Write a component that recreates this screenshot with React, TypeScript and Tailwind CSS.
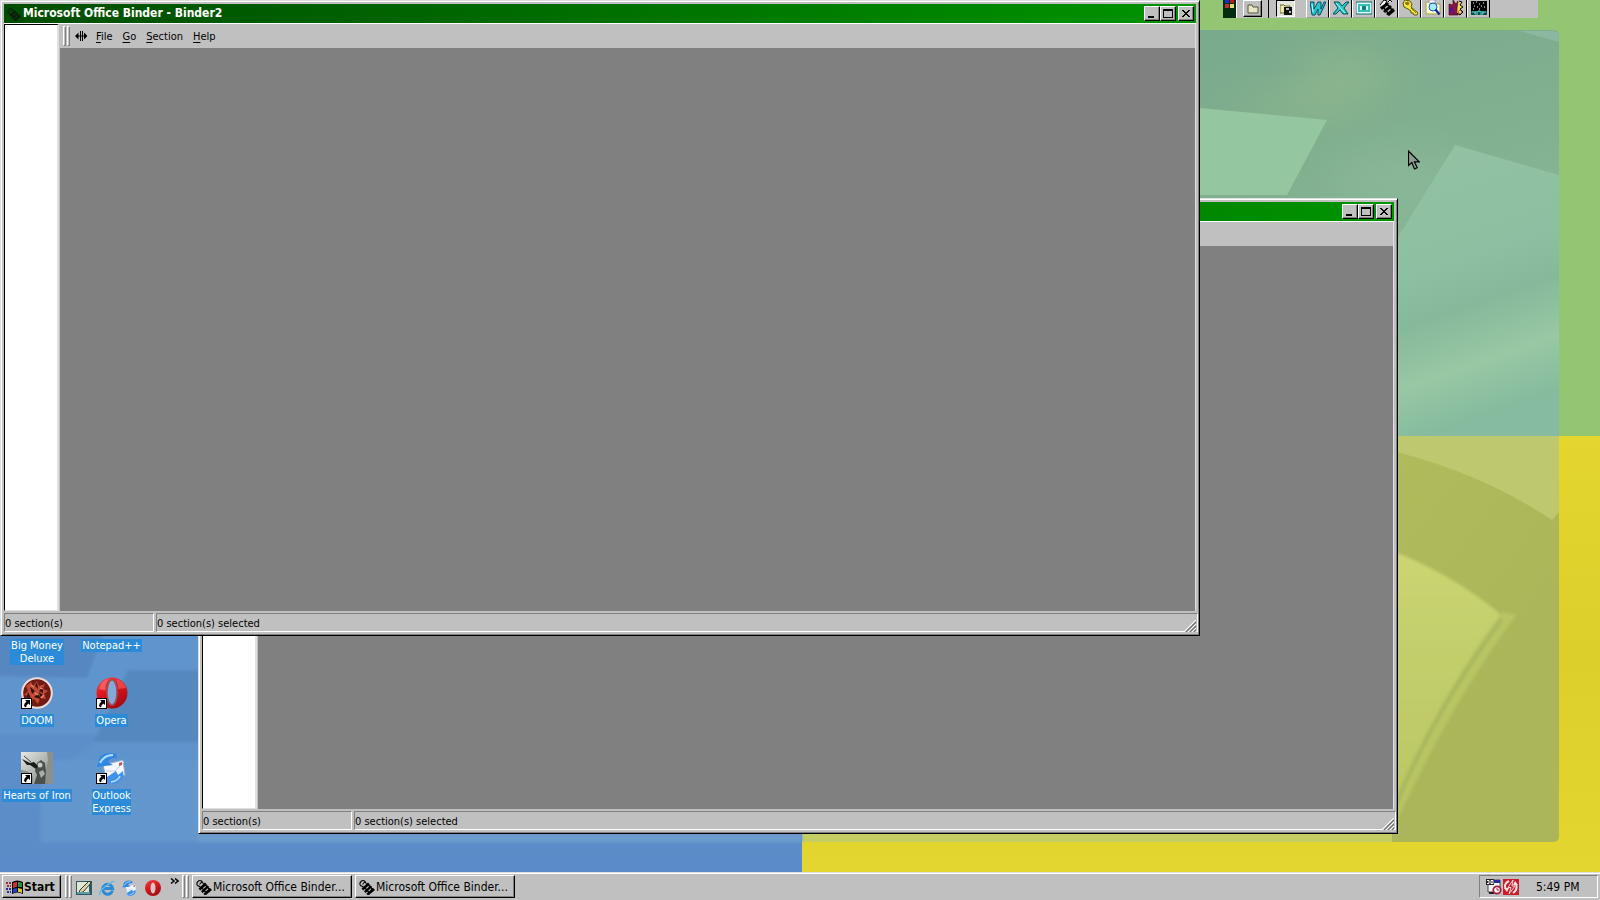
import type { ReactNode } from "react";

const UI_FONT = "font-['DejaVu_Sans_Condensed','DejaVu_Sans',sans-serif]";
const RAISED =
  "border border-t-white border-l-white border-r-black border-b-black shadow-[inset_-1px_-1px_0_#808080]";

function Wallpaper() {
  return (
    <svg
      className="absolute inset-0 h-full w-full"
      viewBox="0 0 1600 872"
      preserveAspectRatio="none"
      aria-hidden="true"
    >
      <defs>
        <linearGradient id="teal" x1="0" y1="0" x2="0.3" y2="1">
          <stop offset="0" stopColor="#78a98c" />
          <stop offset="0.5" stopColor="#82b191" />
          <stop offset="1" stopColor="#8fc0a0" />
        </linearGradient>
        <linearGradient id="pane" x1="0" y1="0" x2="0.2" y2="1">
          <stop offset="0" stopColor="#92c2a2" />
          <stop offset="0.45" stopColor="#8dbfa2" />
          <stop offset="0.62" stopColor="#86b99b" />
          <stop offset="0.82" stopColor="#98c8a4" />
          <stop offset="1" stopColor="#86bb9f" />
        </linearGradient>
        <linearGradient id="olive" x1="0" y1="0" x2="1" y2="0.4">
          <stop offset="0" stopColor="#bcc660" />
          <stop offset="1" stopColor="#abb65a" />
        </linearGradient>
        <linearGradient id="lime" x1="0" y1="0" x2="0" y2="1">
          <stop offset="0" stopColor="#cdd570" />
          <stop offset="0.35" stopColor="#c2cf6c" />
          <stop offset="1" stopColor="#bcc763" />
        </linearGradient>
        <linearGradient id="gold" x1="0" y1="0" x2="0" y2="1">
          <stop offset="0" stopColor="#e4d62e" />
          <stop offset="0.5" stopColor="#dccf2c" />
          <stop offset="1" stopColor="#e3d62f" />
        </linearGradient>
        <linearGradient id="blue" x1="0" y1="0" x2="0" y2="1">
          <stop offset="0" stopColor="#6094cb" />
          <stop offset="1" stopColor="#5b8cc9" />
        </linearGradient>
        <filter id="soft" x="-30%" y="-60%" width="160%" height="220%">
          <feGaussianBlur stdDeviation="20" />
        </filter>
        <filter id="edge">
          <feGaussianBlur stdDeviation="1.5" />
        </filter>
      </defs>
      <rect width="1600" height="436" fill="#93c573" />
      <rect y="436" width="802" height="436" fill="url(#blue)" />
      <rect x="802" y="436" width="798" height="436" fill="url(#gold)" />
      <path d="M1100 30h453q6 0 6 6v400h-459z" fill="url(#teal)" />
      <ellipse cx="1345" cy="75" rx="50" ry="26" fill="#92b98c" opacity="0.7" filter="url(#soft)" />
      <ellipse cx="1300" cy="105" rx="60" ry="14" fill="#95b989" opacity="0.6" filter="url(#soft)" />
      <ellipse cx="1400" cy="180" rx="70" ry="30" fill="#8cb99b" opacity="0.7" filter="url(#soft)" />
      <path d="M1100 103l100 5 127 12-40 75H1100z" fill="#94c69f" />
      <path d="M1455 145l104 30v261H1390V250z" fill="url(#pane)" />
      <path d="M1520 31h33q6 0 6 6v5z" fill="#8bb7a3" />
      <path d="M1100 436h459v400q0 6-6 6H802v-40h298z" fill="url(#olive)" />
      <path d="M1380 436h179v76l-7 8q-75-50-172-72z" fill="#bdc86f" />
      <g filter="url(#edge)">
        <path d="M1390 550q62 24 109 63l3 6q-60 75-112 190z" fill="url(#lime)" />
        <path d="M1502 612l14 3q-64 86-124 215v-30q55-115 110-188z" fill="#b9c564" />
        <path d="M1502 619q-64 85-108 190" fill="none" stroke="#a9b75d" strokeWidth="4" />
      </g>
      <path d="M802 834h590v8H802z" fill="#c5ce65" />
      <g filter="url(#edge)">
        <path d="M41 760h160v82H41z" fill="#6496cd" />
        <path d="M198 834h604v8H198z" fill="#6d9dcc" />
        <path d="M-4 630h109l-18 49-91-2z" fill="#5787c0" />
        <path d="M105 630h100v40h-77l-22 64H-4v-58l91 2z" fill="#6194cd" />
        <path d="M128 670h76v72H94z" fill="#5488bf" />
        <path d="M94 742h110v18H70z" fill="#5e93cb" />
      </g>
    </svg>
  );
}

function ClipIcon({ className }: { className: string }) {
  return (
    <svg viewBox="0 0 16 16" className={className} aria-hidden="true">
      <path
        d="M4.500 8 1.500 6.500Q0 4.500 2 2.500T6 2.500L3.500 5.500M6 2.500 7.500 5"
        fill="none"
        stroke="currentColor"
        strokeWidth="1.100"
      />
      <path d="M2.500 9.500 9 3.500l1.800 2-6.600 6z" fill="currentColor" />
      <path d="M5 12.200 11.600 6.300l1.500 1.700-6.500 6z" fill="currentColor" />
      <path d="M7.400 14.700 13.900 8.800 16 11l-6 5H8.500z" fill="currentColor" />
      <path d="M5.500 8.500l4.500 5M9 5.500l4.500 5" stroke="currentColor" strokeWidth="1.300" />
    </svg>
  );
}

function CaptionButton({ label, children }: { label: string; children: ReactNode }) {
  return (
    <button
      type="button"
      aria-label={label}
      className={`flex h-[15px] w-4 items-center justify-center bg-[#c0c0c0] text-black ${RAISED}`}
    >
      <svg viewBox="0 0 12 11" className="h-[11px] w-3" shapeRendering="crispEdges" aria-hidden="true">
        {children}
      </svg>
    </button>
  );
}

function Gripper() {
  return (
    <span className="flex gap-px" aria-hidden="true">
      <span className="w-[3px] border border-t-white border-r-[#808080] border-b-[#808080] border-l-white" />
      <span className="w-[3px] border border-t-white border-r-[#808080] border-b-[#808080] border-l-white" />
    </span>
  );
}

const MENUS = ["File", "Go", "Section", "Help"];

function BinderWindow({ title, className }: { title: string; className: string }) {
  return (
    <section
      aria-label={title}
      className={`absolute flex h-[636px] w-3/4 flex-col border border-t-[#dfdfdf] border-r-black border-b-black border-l-[#dfdfdf] bg-[#c0c0c0] p-[3px] shadow-[inset_1px_1px_0_white,inset_-1px_-1px_0_#808080] ${className}`}
    >
      <header className="flex h-[19px] shrink-0 items-center bg-linear-to-r from-[#004d00] to-[#009400] pr-0.5 pl-[3px] text-white">
        <ClipIcon className="mr-0.5 h-3.5 w-3.5 text-[#0c1c0c]" />
        <h2 className="grow truncate text-[12px] leading-[19px] font-bold">{title}</h2>
        <CaptionButton label="Minimize">
          <path d="M2 8h6v2H2z" />
        </CaptionButton>
        <CaptionButton label="Maximize">
          <path d="M1 1h10v9H1zm1 2v6h8V3z" fillRule="evenodd" />
        </CaptionButton>
        <span className="w-0.5" />
        <CaptionButton label="Close">
          <path d="M2 2h2v1h1v1h2V3h1V2h2v1H9v1H8v1H7v1h1v1h1v1h1v1H8V8H7V7H5v1H4v1H2V8h1V7h1V6h1V5H4V4H3V3H2z" />
        </CaptionButton>
      </header>
      <div className="flex grow border-t border-white">
        <div className="w-[55px] shrink-0 border-t border-r-2 border-b border-l border-t-black border-r-[#dfdfdf] border-b-[#dfdfdf] border-l-black bg-white" />
        <div className="flex grow flex-col border-r border-[#dfdfdf]">
          <nav className="flex h-6 items-stretch py-0.5 pl-1">
            <Gripper />
            <svg viewBox="0 0 12 10" className="mr-1 ml-[5px] h-2.5 w-3 self-center" aria-hidden="true">
              <path d="M5 0h1v10H5zM7 0h1v10H7zM0 5l3.500-3.500v7zM12.500 5 9 1.500v7z" />
              <path d="M2 4.500h9v1H2z" />
            </svg>
            {MENUS.map((m) => (
              <button key={m} type="button" className="px-[5px] pt-0.5 text-[11px] leading-[18px]">
                <span className="underline underline-offset-2">{m[0]}</span>
                {m.slice(1)}
              </button>
            ))}
          </nav>
          <div className="ml-px grow bg-[#808080]" />
        </div>
      </div>
      <footer className="mt-0.5 flex h-[19px] shrink-0 gap-0.5 text-[11px] leading-[19px]">
        <p className="w-[150px] border border-t-[#808080] border-r-white border-b-white border-l-[#808080]">
          0 section(s)
        </p>
        <p className="grow border border-t-[#808080] border-r-white border-b-white border-l-[#808080]">
          0 section(s) selected
        </p>
        <svg viewBox="0 0 12 12" className="-ml-4 h-3 w-3 self-end" aria-hidden="true">
          <path d="M0 12 12 0M4 12l8-8M8 12l4-4" stroke="#fff" strokeWidth="1.200" />
          <path d="M1.500 12.500 12.500 1.500M5.500 12.500l7-7M9.500 12.500l3-3" stroke="#707070" strokeWidth="1.400" />
        </svg>
      </footer>
    </section>
  );
}

function ShortcutArrow() {
  return (
    <g>
      <path d="M0 21h11v11H0z" fill="#000" />
      <path d="M1 22h9v9H1z" fill="#fff" />
      <path d="M4 23h5v5L7.500 26.500Q5 28 5 30.500L3 29q0-3 2.500-4.500z" fill="#000" />
    </g>
  );
}

function OperaArt() {
  return (
    <>
      <ellipse cx="16" cy="16" rx="15.500" ry="15.500" fill="url(#operaRed)" />
      <ellipse cx="16" cy="15.500" rx="5" ry="12.500" fill="#86aad6" stroke="#8f5a66" strokeWidth="1.600" />
      <path d="M3 12Q5 3 13 1.500q-4 5-3.500 12z" fill="#f57272" opacity="0.7" />
      <path d="M20 2q8 2 10 9l-8 1q0-6-2-10z" fill="#f26060" opacity="0.6" />
    </>
  );
}

function MailArt() {
  return (
    <>
      <path d="M7 13 27 8l2 15-19 3z" fill="#f4f7ff" stroke="#8fa9d8" />
      <path d="M10 19l9 0 9-9" fill="none" stroke="#c5d2ea" />
      <path d="M23 11l3-1v3l-3 1z" fill="#b75a5a" />
      <path d="M1 15 4 5Q10-1 20 2l1 4q-6-1-9 4l5 3z" fill="#2f86e6" />
      <path d="M4 11Q8 3 17 3" stroke="#b2dcff" strokeWidth="1.800" fill="none" />
      <path d="M11 25l9-6 2 4 5-4q2 10-9 13-5 0-8-3z" fill="#3f93ee" />
      <path d="M24 24q-2 5-9 6" stroke="#b9dcff" strokeWidth="1.600" fill="none" />
    </>
  );
}

function DoomArt() {
  return (
    <>
      <circle cx="16" cy="16" r="14.800" fill="#6f1a12" stroke="#efdcd6" strokeWidth="2" />
      <path
        d="M5 9l5-4 2 4 4-5 2 5 6-2-2 5 5 2-4 3 2 5-6-1-2 6-4-5-5 3 1-6-6-1 4-4z"
        fill="#c24a34"
      />
      <path d="M9 10l5 4-3 3zM22 10l-4 4 4 2zM13 20l4-3 3 5-4-1zM16 5l1 7-3-3zM7 15l3 6-4-1zM18 15l4 3-3 2z" fill="#33100c" />
      <path d="M10 8l3 2M19 11l3 1M14 16l3 2M20 21l3-3" stroke="#e88f72" strokeWidth="1.200" />
    </>
  );
}

function HeartsArt() {
  return (
    <>
      <path d="M0 0h32v32H0z" fill="url(#ironGrey)" />
      <path d="M26 0h6v32h-5l-2-14 2-10z" fill="#8a908a" />
      <path d="M13 32l3-9-2-4 2-8 4-3 4 3 1 9-1 12z" fill="#4c504c" />
      <circle cx="19" cy="13" r="2.500" fill="#c5cac5" />
      <path d="M1 7l8 4 4-1 4 4-2 3-6-4-3 0z" fill="#181c18" />
      <path d="M0 18q8 0 12 7v7H0z" fill="#8b908c" />
      <path d="M18 20l4-2 2 4-4 4z" fill="#a8ada8" />
      <path d="M3 4l7 6" stroke="#444844" strokeWidth="1" />
    </>
  );
}

type Shortcut = { label: string; art?: ReactNode; name: string };

const SHORTCUTS: Shortcut[] = [
  { name: "bigmoney", label: "Big Money Deluxe" },
  { name: "notepad", label: "Notepad++" },
  { name: "doom", label: "DOOM", art: <DoomArt /> },
  { name: "opera", label: "Opera", art: <OperaArt /> },
  { name: "hearts", label: "Hearts of Iron", art: <HeartsArt /> },
  { name: "outlook", label: "Outlook Express", art: <MailArt /> },
];

const LABEL_WIDTH: Record<string, string> = {
  bigmoney: "w-[54px]",
  outlook: "w-min",
};

function DesktopIcons() {
  return (
    <div className="absolute top-[602px] left-0 grid auto-rows-[75px] grid-cols-[74px_75px]">
      {SHORTCUTS.map((s) => (
        <button key={s.name} type="button" className="flex flex-col items-center gap-[5px] text-white">
          <svg viewBox="0 0 32 32" className="h-8 w-8 shrink-0" aria-hidden="true">
            {s.art}
            {s.art && <ShortcutArrow />}
          </svg>
          <span
            className={`bg-[#2b8bd9] text-[11px] leading-[13px] ${LABEL_WIDTH[s.name] ?? "whitespace-nowrap px-px"}`}
          >
            {s.label}
          </span>
        </button>
      ))}
    </div>
  );
}

const OFFICE_TOOLS: { name: string; art: ReactNode }[] = [
  {
    name: "Word",
    art: (
      <>
        <path d="M0 2h4l0 7 4-7h3l0 7 3-7h2l-6 13H8V9l-3 6H2z" fill="#20c8d0" stroke="#00405c" strokeWidth="0.900" />
        <path d="M2 4l1 8" stroke="#b5ffff" />
      </>
    ),
  },
  {
    name: "Excel",
    art: (
      <>
        <path d="M1 2h5l3 4 4-4h3l-5 6 4 6h-5l-3-4-4 4H0l5-6z" fill="#28c8c8" stroke="#003f48" strokeWidth="0.900" />
        <path d="M3 3l9 10" stroke="#b5ffff" />
      </>
    ),
  },
  {
    name: "PowerPoint",
    art: (
      <>
        <path d="M0 2h16v12H0z" fill="#e8ffff" stroke="#007080" />
        <path d="M2 4h12v8H2z" fill="#38bec0" />
        <path d="M4 6h8v4H4z" fill="#cff" />
        <path d="M6 6h4v4H6z" fill="#187c6c" />
      </>
    ),
  },
  {
    name: "Binder",
    art: (
      <>
        <path d="M1 5l4-5 3 1-3 5M9 2l2-2 2 2" fill="#fff" stroke="#000" />
        <path d="M1 7.500 8 2l2 2-7 6zM4 11l7-6 2 2-7 6zM7 14l7-6 2 3-6 5z" fill="#000" />
        <path d="M4 7l5 6M8 4l5 6" stroke="#000" strokeWidth="1.500" />
      </>
    ),
  },
  {
    name: "Access",
    art: (
      <>
        <path
          d="M3 0l5 1 2 3-1 3 7 6-1 2h-3l-1-2h-2l0-2-3-2-4-2-1-4z"
          fill="#f7e838"
          stroke="#514500"
          strokeWidth="0.900"
        />
        <path d="M3 3l3-1 1 2-2 1zM9 8l5 5" fill="#8c7900" stroke="#8c7900" />
      </>
    ),
  },
  {
    name: "Find",
    art: (
      <>
        <path d="M1 2h5l1 2h8v10H1z" fill="#ffffd0" stroke="#a79e42" />
        <path d="M4 0h6v3H4z" fill="#fff" stroke="#7777aa" strokeWidth="0.600" />
        <circle cx="8" cy="7" r="4" fill="#a2ecff" stroke="#1b55b4" />
        <path d="M10.500 9.500l4 5" stroke="#0a22a8" strokeWidth="2.200" />
      </>
    ),
  },
  {
    name: "Schedule",
    art: (
      <>
        <path d="M1 4l4 1V0l3 4 2-3-1 7 1 7H1z" fill="#8c1540" stroke="#3c0018" strokeWidth="0.600" />
        <path d="M2 8l5 6M5 7l-3 5" stroke="#2211dd" />
        <path d="M11 1l3 1-2 3 3 2-3 2 3 3-3 3-3-2" fill="#f5df39" stroke="#000" />
        <circle cx="12" cy="12" r="1.500" fill="#fff" stroke="#aa6600" />
      </>
    ),
  },
  {
    name: "MS-DOS",
    art: (
      <>
        <path d="M0 1h16v10H0z" fill="#000" />
        <path d="M2 3h1M5 2h1M8 4h1M12 3h1M3 6h1M6 7h1M10 6h1M13 7h1M2 9h1M8 9h1" stroke="#fff" />
        <path d="M0 11h16v4H0z" fill="#104848" />
        <path d="M1 12h6v-1h2v1h6M4 12v2h3M9 14h3v-2" stroke="#54dede" fill="none" />
      </>
    ),
  },
];

function OfficeBar() {
  return (
    <div className="absolute top-0 right-[62px] flex h-[18px] w-[315px] bg-[#c0c0c0]" aria-label="Office shortcut bar">
      <svg viewBox="0 0 13 18" className="h-[18px] w-[13px] shrink-0" shapeRendering="crispEdges" aria-hidden="true">
        <path d="M0 0h13v18H0z" fill="#062c10" />
        <path d="M2 0h4v3H2z" fill="#1630d0" />
        <path d="M7 0h4v3H7z" fill="#c01818" />
        <path d="M2 4h4v4H2z" fill="#c03030" />
        <path d="M7 4h4v4H7z" fill="#e8dc70" />
      </svg>
      <div className="flex w-[33px] shrink-0 justify-center border-r border-l border-r-black border-l-white">
        <button type="button" aria-label="Office" className={`flex h-[17px] w-[19px] justify-center ${RAISED}`}>
          <svg viewBox="0 0 12 14" className="h-3.5 w-3" aria-hidden="true">
            <path d="M1 4h4l1 2h5v6H1z" fill="#e9e7c7" stroke="#55553a" />
          </svg>
        </button>
      </div>
      <div className="flex w-[37px] shrink-0 pl-[7px]">
        <button
          type="button"
          aria-label="Desktop"
          className="flex h-[17px] w-[19px] justify-center border border-t-black border-r-white border-b-white border-l-black bg-[#e4e4e0]"
        >
          <svg viewBox="0 0 12 14" className="h-3.5 w-3" aria-hidden="true">
            <path d="M0 4h4l1 1h5v7H0z" fill="#ece7a8" stroke="#6c6830" />
            <path d="M4 6h8v8H4z" fill="#111" />
            <path d="M6 7h3v2H6zM9 10h2v2H9z" fill="#bbb" />
          </svg>
        </button>
      </div>
      {OFFICE_TOOLS.map((t) => (
        <button
          key={t.name}
          type="button"
          aria-label={t.name}
          className="flex w-[23px] shrink-0 justify-center border-r border-b border-l border-r-black border-b-[#a0a0a0] border-l-white"
        >
          <svg viewBox="0 0 16 16" className="h-4 w-4" aria-hidden="true">
            {t.art}
          </svg>
        </button>
      ))}
    </div>
  );
}

function Pointer() {
  return (
    <svg viewBox="0 0 12 20" className="absolute top-[150px] left-[88%] h-5 w-3" aria-hidden="true">
      <path
        d="M.5 1v14.500l3.300-3 2.700 6.500 2.700-1.200-2.800-6h4.800z"
        fill="#8a9f92"
        stroke="#000"
        strokeWidth="1.200"
      />
    </svg>
  );
}

function WindowsFlag() {
  return (
    <svg viewBox="0 0 17 14" className="h-3.5 w-[17px]" aria-hidden="true">
      <path d="M6 2q5-3 11 0v12q-6-3-11 0z" fill="#000" />
      <path d="M7 3q2-1 4-1v5q-2 0-4 1z" fill="#d82828" />
      <path d="M12 2q2 0 4 1v4l-4-0z" fill="#25953a" />
      <path d="M7 9q2-1 4-1v4q-2 0-4 1z" fill="#2444c8" />
      <path d="M12 8l4 1v4q-2-1-4-1z" fill="#e0cd2c" />
      <path d="M0 3h2M3 3h2M1 6h2M4 6h1" stroke="#a02838" strokeWidth="2" />
      <path d="M0 9h2M3 9h2M1 12h2M4 12h1" stroke="#28308c" strokeWidth="2" />
    </svg>
  );
}

function QuickLaunch() {
  const cell = "h-4 w-4";
  return (
    <div className="flex items-center gap-[7px]">
      <button type="button" aria-label="Show Desktop">
        <svg viewBox="0 0 16 16" className={cell} aria-hidden="true">
          <path d="M0 1h16v14H0z" fill="#275c63" />
          <path d="M1 2h12v10H1z" fill="#e3e6d2" />
          <path d="M4 10l9-9 2 2-8 9-4 1z" fill="#ddd6a5" stroke="#2b3b38" />
          <path d="M1 13h13" stroke="#5f9fa3" strokeWidth="2" />
        </svg>
      </button>
      <button type="button" aria-label="Internet Explorer">
        <svg viewBox="0 0 16 16" className={cell} aria-hidden="true">
          <path d="M13.500 10.500A5 5 0 1 1 13.600 8.500H5" fill="none" stroke="#2b8bd6" strokeWidth="3" />
          <path d="M1 15Q-1 12 7 6t8-4" fill="none" stroke="#67b7e8" strokeWidth="1.500" />
        </svg>
      </button>
      <button type="button" aria-label="Outlook Express mail">
        <svg viewBox="0 0 32 32" className={cell} aria-hidden="true">
          <MailArt />
        </svg>
      </button>
      <button type="button" aria-label="Opera browser">
        <svg viewBox="0 0 16 16" className={cell} aria-hidden="true">
          <circle cx="8" cy="8" r="8" fill="url(#operaRed)" />
          <ellipse cx="8" cy="8" rx="2.500" ry="5.500" fill="#d9c6c6" />
        </svg>
      </button>
      <button type="button" aria-label="More" className="ml-0.5 self-start">
        <svg viewBox="0 0 9 7" className="h-[7px] w-[9px]" aria-hidden="true">
          <path d="M1 .5l3 2.500-3 2.500M5 .5l3 2.500-3 2.500" fill="none" stroke="#000" strokeWidth="1.500" />
        </svg>
      </button>
    </div>
  );
}

function TaskButton() {
  return (
    <button type="button" className={`flex w-40 items-center pt-px pl-[3px] text-[12px] ${RAISED}`}>
      <ClipIcon className="mr-px h-4 w-4 shrink-0" />
      <span className="whitespace-nowrap">Microsoft Office Binder...</span>
    </button>
  );
}

function Taskbar() {
  return (
    <footer className="relative flex h-7 shrink-0 border-t border-[#dfdfdf] bg-[#c0c0c0] pt-0.5 pr-0.5 pb-0.5 pl-0.5 shadow-[inset_0_1px_0_white]">
      <button type="button" className={`mr-1 flex w-[59px] items-center gap-px pt-px pl-[3px] text-[12px] font-bold ${RAISED}`}>
        <WindowsFlag />
        Start
      </button>
      <Gripper />
      <div className="ml-1 flex w-[106px] pt-[3px] pb-px">
        <QuickLaunch />
      </div>
      <Gripper />
      <div className="ml-[3px] flex grow gap-[3px]">
        <TaskButton />
        <TaskButton />
      </div>
      <div className="flex w-[119px] items-center border border-t-[#808080] border-r-white border-b-white border-l-[#808080] pl-[5px]">
        <svg viewBox="0 0 17 16" className="mr-px h-4 w-[17px]" aria-hidden="true">
          <path d="M3 1h12v12H3z" fill="#f5f5f5" stroke="#444444" />
          <path d="M1 0h8v6H1z" fill="#222222" />
          <path d="M2 1.500h2v3H2M6 1.500h2v3H6z" stroke="#fff" fill="none" />
          <path d="M9 1h6v3H9z" fill="#202cac" />
          <path d="M4 13h5v2H4z" fill="#222222" />
          <circle cx="12" cy="11" r="3.700" fill="#fff" stroke="#b01838" strokeWidth="1.800" />
          <path d="M12 9v2h2" stroke="#b01838" fill="none" />
        </svg>
        <svg viewBox="0 0 16 16" className="h-4 w-4" aria-hidden="true">
          <path d="M0 0h16v16H0z" fill="#d01c28" />
          <path d="M6 2Q0 5 3 10M10 14q5-3 3-9" stroke="#ffe3e3" strokeWidth="2" fill="none" />
          <path d="M1 9h5l-2 4zM15 6h-5l2-4z" fill="#ffe3e3" />
          <path d="M10 1 5 8.500h3L6 15l6-8H9z" fill="#d01c28" stroke="#fff" strokeWidth="0.800" />
        </svg>
        <time className="ml-[17px] pt-px text-[12px]">5:49 PM</time>
      </div>
    </footer>
  );
}

export default function App() {
  return (
    <div className={`flex min-h-screen flex-col overflow-hidden text-black ${UI_FONT}`}>
      <svg className="absolute h-0 w-0" aria-hidden="true">
        <defs>
          <linearGradient id="operaRed" x1="0" y1="0" x2="0.500" y2="1">
            <stop offset="0" stopColor="#f04a4a" />
            <stop offset="0.500" stopColor="#dc161c" />
            <stop offset="1" stopColor="#a80c12" />
          </linearGradient>
          <linearGradient id="ironGrey" x1="0" y1="0" x2="1" y2="1">
            <stop offset="0" stopColor="#e6e9e6" />
            <stop offset="0.500" stopColor="#b0b5b1" />
            <stop offset="1" stopColor="#7c807c" />
          </linearGradient>
        </defs>
      </svg>
      <main className="relative grow">
        <Wallpaper />
        <DesktopIcons />
        <OfficeBar />
        <BinderWindow title="Microsoft Office Binder - Binder1" className="top-[198px] left-[198px]" />
        <BinderWindow title="Microsoft Office Binder - Binder2" className="top-0 left-0" />
        <Pointer />
      </main>
      <Taskbar />
    </div>
  );
}
